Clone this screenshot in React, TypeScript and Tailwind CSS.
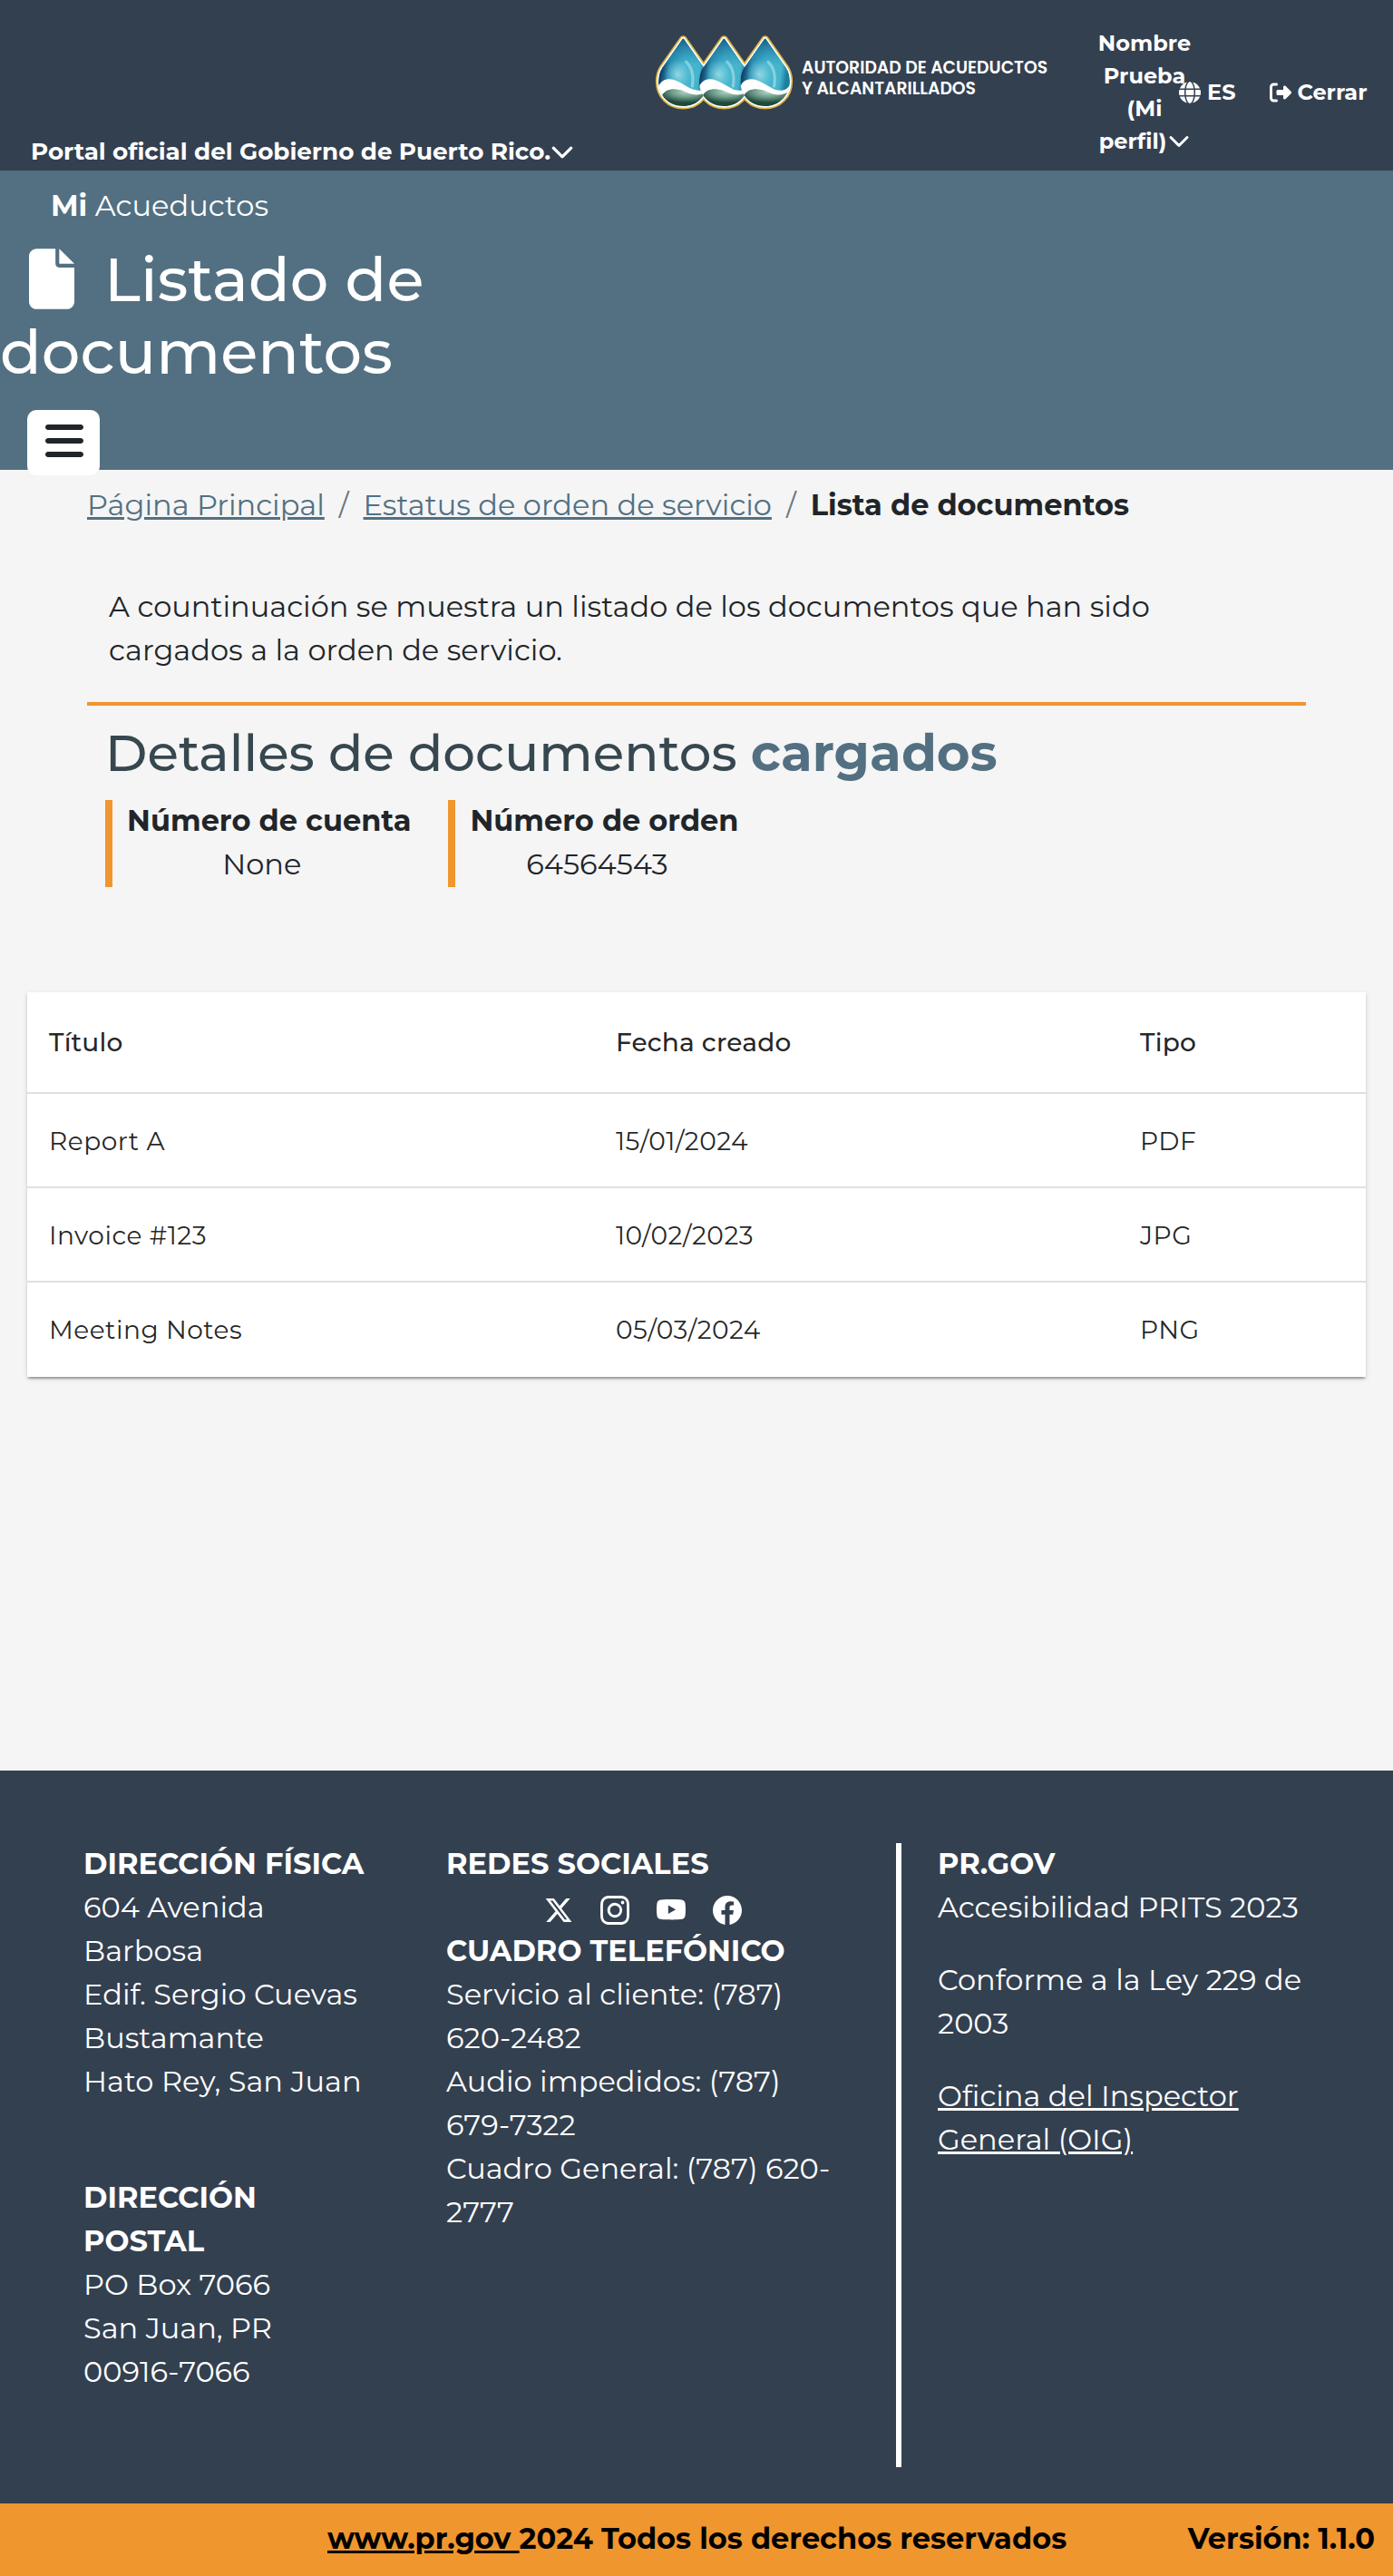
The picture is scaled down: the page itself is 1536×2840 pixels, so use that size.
import {
  FaBars,
  FaFile,
  FaGlobe,
  FaRightFromBracket,
  FaXTwitter,
} from "react-icons/fa6";
import { BsChevronDown, BsFacebook, BsInstagram, BsYoutube } from "react-icons/bs";

const documents = [
  { title: "Report A", date: "15/01/2024", type: "PDF" },
  { title: "Invoice #123", date: "10/02/2023", type: "JPG" },
  { title: "Meeting Notes", date: "05/03/2024", type: "PNG" },
];

const dropCenters = [160, 295, 431];

function dropPath(c: number) {
  return `M${c - 3} 128Q${c} 124 ${c + 3} 128L${c + 69} 222Q${c + 82} 242 ${c + 82} 268C${c + 82} 316 ${c + 46} 351 ${c} 351C${c - 46} 351 ${c - 82} 316 ${c - 82} 268Q${c - 82} 242 ${c - 69} 222Z`;
}

/* Three water drops, each with a white wave over a green base */
function DropsLogo() {
  return (
    <svg viewBox="60 110 474 255" className="h-[85px] w-[158px] shrink-0" aria-hidden="true">
      <defs>
        <linearGradient id="water" x1="0" y1="0" x2="1" y2="0.2">
          <stop offset="0" stopColor="#0a2347" />
          <stop offset="0.14" stopColor="#123f68" />
          <stop offset="0.3" stopColor="#2a8fb2" />
          <stop offset="0.55" stopColor="#44b6d0" />
          <stop offset="0.88" stopColor="#46b4cc" />
          <stop offset="1" stopColor="#1d7f9f" />
        </linearGradient>
        <linearGradient id="tip" x1="0" y1="0" x2="0" y2="1">
          <stop offset="0" stopColor="#12507c" stopOpacity="0.85" />
          <stop offset="0.4" stopColor="#1f7fa5" stopOpacity="0" />
        </linearGradient>
        <radialGradient id="glow">
          <stop offset="0" stopColor="#a5dfe8" stopOpacity="0.85" />
          <stop offset="1" stopColor="#7fd0de" stopOpacity="0" />
        </radialGradient>
        <radialGradient id="base" cx="0.55" cy="0.15" r="0.65">
          <stop offset="0" stopColor="#b4d6c8" />
          <stop offset="0.5" stopColor="#6e9c8b" />
          <stop offset="1" stopColor="#1f4a3b" />
        </radialGradient>
        {dropCenters.map((c) => (
          <clipPath key={c} id={`drop-${c}`}>
            <path d={dropPath(c)} />
          </clipPath>
        ))}
      </defs>
      {dropCenters.map((c) => (
        <path key={c} d={dropPath(c)} fill="#dbb445" stroke="#dbb445" strokeWidth="19" strokeLinejoin="round" />
      ))}
      {dropCenters.map((c) => (
        <path key={c} d={dropPath(c)} fill="#fff" stroke="#fff" strokeWidth="9" strokeLinejoin="round" />
      ))}
      {dropCenters.map((c) => (
        <g key={c} clipPath={`url(#drop-${c})`}>
          <path d={dropPath(c)} fill="url(#water)" />
          <path d={dropPath(c)} fill="url(#tip)" />
          <ellipse cx={c - 18} cy="245" rx="44" ry="50" fill="url(#glow)" />
          <path
            d={`M${c + 10} 204Q${c + 38} 230 ${c + 30} 284`}
            fill="none"
            stroke="#c3ebf2"
            strokeOpacity="0.5"
            strokeWidth="10"
            strokeLinecap="round"
          />
          <path
            d={`M${c - 84} 360V290C${c - 74} 262 ${c - 52} 256 ${c - 25} 265C${c + 5} 276 ${c + 30} 302 ${c + 56} 298Q${c + 76} 294 ${c + 84} 276V360Z`}
            fill="#fff"
          />
          <path
            d={`M${c - 70} 314C${c - 56} 290 ${c - 24} 290 ${c + 4} 301C${c + 28} 312 ${c + 50} 318 ${c + 74} 304C${c + 56} 338 ${c + 28} 350 ${c} 350C${c - 30} 350 ${c - 58} 336 ${c - 70} 314Z`}
            fill="url(#base)"
          />
        </g>
      ))}
    </svg>
  );
}

function TopBar() {
  return (
    <div className="flex h-[188px] items-start bg-[#334050] font-bold text-white">
      <div className="flex w-[720px] items-center pt-[148px] pl-[34px] text-[26.2px] leading-[39px] tracking-normal">
        Portal oficial del Gobierno de Puerto Rico.
        <BsChevronDown className="size-[26px] stroke-1" />
      </div>
      <div className="flex pt-[37px]">
        <DropsLogo />
        <p className="w-[332px] pt-[26px] pl-[6px] font-[Poppins,sans-serif] text-[18.8px] leading-[23px] font-semibold tracking-normal">
          AUTORIDAD DE ACUEDUCTOS
          <br />Y ALCANTARILLADOS
        </p>
      </div>
      <div className="w-[104px] shrink-0 pt-[30px] text-center text-2xl leading-9">
        Nombre Prueba (Mi
        <span className="flex items-center justify-center gap-[2px]">
          perfil)
          <BsChevronDown className="size-6 shrink-0 stroke-1" />
        </span>
      </div>
      <div className="-ml-[14px] flex pt-[84px] text-2xl leading-9">
        <span className="flex items-center gap-[7px]">
          <FaGlobe className="size-6" />
          ES
        </span>
        <span className="ml-[38px] flex items-center gap-[6px]">
          <FaRightFromBracket className="size-6" />
          Cerrar
        </span>
      </div>
    </div>
  );
}

function TitleBand() {
  return (
    <div className="h-[330px] bg-[#537082] pt-[15px] text-white">
      <p className="pl-[56px]">
        <b>Mi</b> Acueductos
      </p>
      <h1 className="mt-[17px] w-[520px] text-[67px] leading-[80px] font-medium tracking-[0.1px]">
        <FaFile className="mr-[33px] ml-[32px] inline h-[67px] w-[50px] align-[-9px]" />
        Listado de documentos
      </h1>
      <div className="mt-[24px] ml-[30px] flex h-[72px] w-20 items-center justify-center rounded-[10px] bg-white text-[#212529]">
        <FaBars className="mb-[4px] ml-px size-12" />
      </div>
    </div>
  );
}

function Detail({ label, value }: { label: string; value: string }) {
  return (
    <div className="h-24 border-l-8 border-[#f0962e] text-center">
      <b className="-mt-px block pl-4">{label}</b>
      <p>{value}</p>
    </div>
  );
}

function DocumentsTable() {
  return (
    <div className="mx-[30px] mt-[116px] bg-white text-[28px] leading-[42px] text-black/87 shadow-[0_4px_2px_-2px_rgba(0,0,0,0.2),0_2px_2px_0_rgba(0,0,0,0.14),0_2px_6px_0_rgba(0,0,0,0.12)]">
      <div className="grid h-[110px] grid-cols-[625px_578px_1fr] items-center pb-px font-medium tracking-[0.2px]">
        <span className="pl-6">Título</span>
        <span className="pl-6">Fecha creado</span>
        <span className="pl-6">Tipo</span>
      </div>
      {documents.map((doc) => (
        <div
          key={doc.title}
          className="grid h-[104px] grid-cols-[625px_578px_1fr] items-center border-t-2 border-black/12 pt-[2px] tracking-[0.5px] last:h-[106px] last:pb-[2px]"
        >
          <span className="pl-6">{doc.title}</span>
          <span className="pl-6">{doc.date}</span>
          <span className="pl-6">{doc.type}</span>
        </div>
      ))}
    </div>
  );
}

function Footer() {
  return (
    <footer>
      <div className="flex h-[808px] items-start bg-[#334050] pt-[80px] pl-[92px] text-white">
        <div className="-mt-px w-[320px]">
          <b>DIRECCIÓN FÍSICA</b>
          <p>604 Avenida Barbosa</p>
          <p>Edif. Sergio Cuevas Bustamante</p>
          <p>Hato Rey, San Juan</p>
          <b className="mt-20 block">DIRECCIÓN POSTAL</b>
          <p>PO Box 7066</p>
          <p>San Juan, PR 00916-7066</p>
        </div>
        <div className="-mt-px ml-[80px] w-[436px]">
          <b className="block">REDES SOCIALES</b>
          <div className="flex h-12 items-center justify-center gap-[30px] pt-[6px] pr-[2px]">
            <FaXTwitter className="size-8" />
            <BsInstagram className="size-8" />
            <BsYoutube className="size-8" />
            <BsFacebook className="size-8" />
          </div>
          <b className="block">CUADRO TELEFÓNICO</b>
          <p>Servicio al cliente: (787) 620-2482</p>
          <p>Audio impedidos: (787) 679-7322</p>
          <p>Cuadro General: (787) 620-2777</p>
        </div>
        <div className="ml-[60px] h-[688px] w-[6px] bg-white" />
        <div className="-mt-px ml-[40px] w-[420px]">
          <b>PR.GOV</b>
          <p className="mb-8">Accesibilidad PRITS 2023</p>
          <p className="mb-8">Conforme a la Ley 229 de 2003</p>
          <a className="underline">Oficina del Inspector General (OIG)</a>
        </div>
      </div>
      <div className="flex h-20 justify-between bg-[#f0962e] pt-[15px] pr-5 pl-[361px] font-bold text-black">
        <p>
          <a className="underline">www.pr.gov </a>2024 Todos los derechos reservados
        </p>
        <p>Versión: 1.1.0</p>
      </div>
    </footer>
  );
}

export default function App() {
  return (
    <div className="h-[2840px] w-[1536px] overflow-hidden bg-[#f5f5f5] font-[Montserrat,Inter,sans-serif] text-[32px] leading-[48px] tracking-[0.03px] text-[#212529] [font-variant-ligatures:none]">
      <TopBar />
      <TitleBand />
      <main className="h-[1434px] pt-[15px]">
        <nav className="flex gap-4 pl-24">
          <a className="text-[#537082] underline">Página Principal</a>
          <span className="text-[#6c757d]">/</span>
          <a className="text-[#537082] underline">Estatus de orden de servicio</a>
          <span className="text-[#6c757d]">/</span>
          <b>Lista de documentos</b>
        </nav>
        <p className="mt-16 mr-[216px] ml-[120px]">
          A countinuación se muestra un listado de los documentos que han sido cargados a la orden de servicio.
        </p>
        <hr className="mx-24 mt-[33px] border-t-4 border-[#f0962e]" />
        <h2 className="mt-[19px] ml-[116px] text-[56.2px] leading-[67px] font-medium tracking-[0.05px] text-[#37474f]">
          Detalles de documentos <b className="text-[#537082]">cargados</b>
        </h2>
        <div className="mt-[18px] ml-[116px] flex gap-[41px]">
          <Detail label="Número de cuenta" value="None" />
          <Detail label="Número de orden" value="64564543" />
        </div>
        <DocumentsTable />
      </main>
      <Footer />
    </div>
  );
}
